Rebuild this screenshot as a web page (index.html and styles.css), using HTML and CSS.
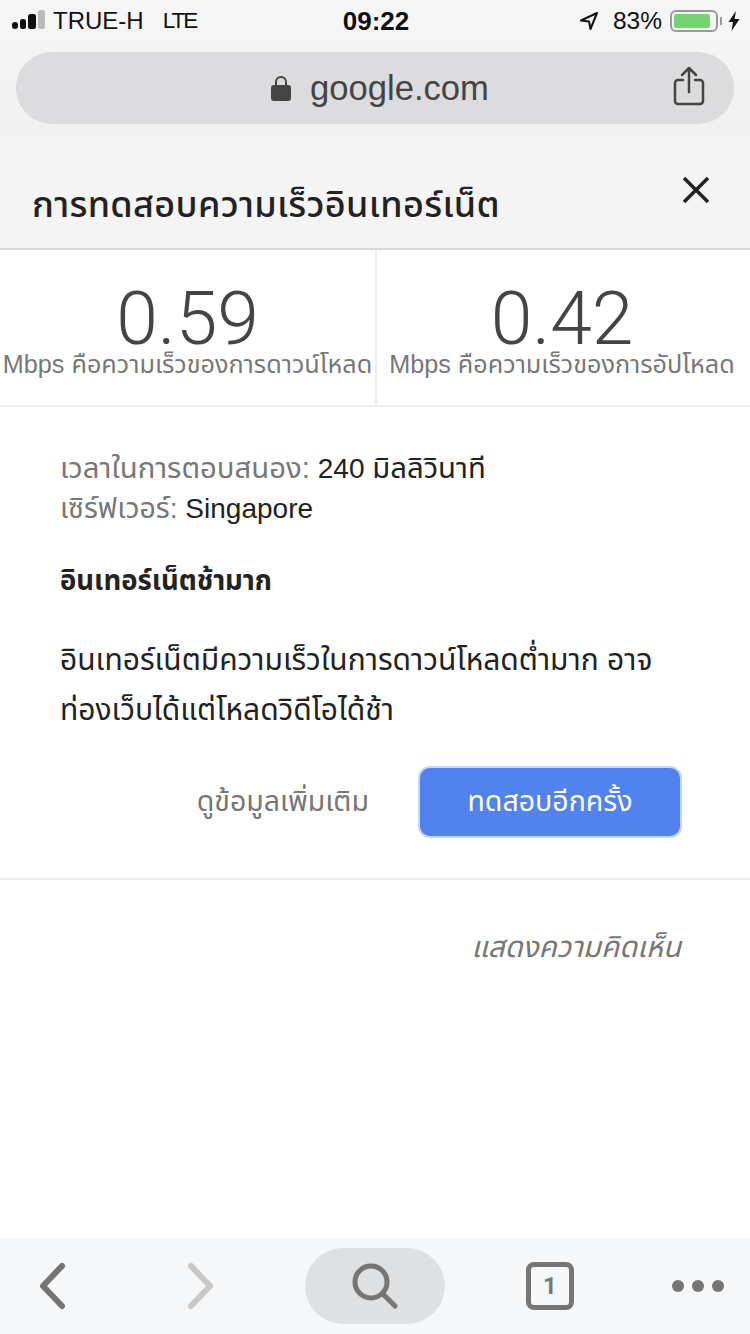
FILE: index.html
```html
<!DOCTYPE html>
<html lang="th">
<head>
    <meta charset="UTF-8">
    <meta name="viewport" content="width=device-width, initial-scale=1.0">
    <title>google.com</title>
    <link rel="stylesheet" href="styles.css">
</head>
<body>
    <div class="page">
        <div class="browser-top">
            <div class="status-bar">
                <div class="status-left">
                    <svg class="signal" width="34" height="20" viewBox="0 0 34 20">
                        <rect x="0" y="12" width="6" height="7" rx="3" fill="#111"/>
                        <rect x="8" y="9" width="6" height="10" rx="2.5" fill="#111"/>
                        <rect x="16" y="4" width="8" height="15" rx="2.5" fill="#111"/>
                        <rect x="26" y="0" width="7" height="19" rx="2" fill="#bbb"/>
                    </svg>
                    <span class="carrier">TRUE-H</span>
                    <span class="network">LTE</span>
                </div>
                <div class="status-time">09:22</div>
                <div class="status-right">
                    <svg width="20" height="20" viewBox="0 0 20 20">
                        <path d="M18 2 L2 9.5 L10 10.5 L11.5 18 Z" fill="none" stroke="#111" stroke-width="2" stroke-linejoin="round"/>
                    </svg>
                    <span class="battery-text">83%</span>
                    <div class="battery"><div class="battery-fill"></div></div>
                    <div class="battery-cap"></div>
                    <svg width="12" height="20" viewBox="0 0 12 20">
                        <path d="M8 0 L0.5 11 H5 L3.5 20 L11.5 8 H6.5 Z" fill="#111"/>
                    </svg>
                </div>
            </div>
            <div class="address-bar">
                <div class="address">
                    <svg width="20" height="26" viewBox="0 0 20 26">
                        <path d="M5 11 V7 a5 5 0 0 1 10 0 V11" fill="none" stroke="#444" stroke-width="2"/>
                        <rect x="0" y="10" width="20" height="16" rx="3" fill="#444"/>
                    </svg>
                    <span>google.com</span>
                </div>
                <svg class="share" width="32" height="40" viewBox="0 0 32 40">
                    <path d="M10 14 H5 a3 3 0 0 0 -3 3 V35 a3 3 0 0 0 3 3 H27 a3 3 0 0 0 3 -3 V17 a3 3 0 0 0 -3 -3 H22" fill="none" stroke="#444" stroke-width="2.5" stroke-linecap="round"/>
                    <path d="M16 26 V2 M9 9 L16 2 L23 9" fill="none" stroke="#444" stroke-width="2.5" stroke-linecap="round" stroke-linejoin="round"/>
                </svg>
            </div>
        </div>

        <div class="panel-head">
            <h1>การทดสอบความเร็วอินเทอร์เน็ต</h1>
            <svg class="close" width="28" height="28" viewBox="0 0 28 28">
                <path d="M2 2 L26 26 M26 2 L2 26" stroke="#222" stroke-width="3.5"/>
            </svg>
        </div>

        <div class="speeds">
            <div class="speed">
                <div class="speed-num">0.59</div>
                <div class="speed-label">Mbps คือความเร็วของการดาวน์โหลด</div>
            </div>
            <div class="speed">
                <div class="speed-num">0.42</div>
                <div class="speed-label">Mbps คือความเร็วของการอัปโหลด</div>
            </div>
        </div>

        <div class="details">
            <div class="meta"><span class="meta-key latency">เวลาในการตอบสนอง:</span> 240 <span class="latency">มิลลิวินาที</span></div>
            <div class="meta"><span class="meta-key server">เซิร์ฟเวอร์:</span> Singapore</div>
            <div class="verdict">อินเทอร์เน็ตช้ามาก</div>
            <p class="desc">อินเทอร์เน็ตมีความเร็วในการดาวน์โหลดต่ำมาก อาจ<br>ท่องเว็บได้แต่โหลดวิดีโอได้ช้า</p>
            <div class="actions">
                <a class="more">ดูข้อมูลเพิ่มเติม</a>
                <button class="retry">ทดสอบอีกครั้ง</button>
            </div>
        </div>

        <div class="feedback">แสดงความคิดเห็น</div>

        <div class="toolbar">
            <svg class="back" width="30" height="48" viewBox="0 0 30 48">
                <path d="M24 4 L5 24 L24 44" fill="none" stroke="#757575" stroke-width="6" stroke-linecap="round" stroke-linejoin="round"/>
            </svg>
            <svg class="forward" width="30" height="48" viewBox="0 0 30 48">
                <path d="M5 4 L24 24 L5 44" fill="none" stroke="#c8c8c8" stroke-width="6" stroke-linecap="round" stroke-linejoin="round"/>
            </svg>
            <div class="search-pill">
                <svg width="48" height="48" viewBox="0 0 48 48">
                    <circle cx="20" cy="20" r="16" fill="none" stroke="#757575" stroke-width="5"/>
                    <path d="M32 32 L44 44" stroke="#757575" stroke-width="5" stroke-linecap="round"/>
                </svg>
            </div>
            <div class="tabs">1</div>
            <div class="dots"><i></i><i></i><i></i></div>
        </div>
    </div>
</body>
</html>
```

FILE: styles.css
```css
* {
    box-sizing: border-box;
}

body {
    margin: 0;
    padding: 0;
    background-color: #fff;
    font-family: "Liberation Sans", "Noto Sans", "Noto Sans Thai", "DejaVu Sans", sans-serif;
}

.page {
    width: 750px;
    height: 1334px;
    display: flex;
    flex-direction: column;
    overflow: hidden;
}

.browser-top {
    height: 136px;
    background: linear-gradient(#f6f6f7, #f0f0f1);
    flex-shrink: 0;
}

.status-bar {
    height: 42px;
    padding: 0 10px 0 12px;
    display: flex;
    align-items: center;
    justify-content: space-between;
    color: #111;
    font-size: 24px;
}

.status-left, .status-right {
    width: 250px;
    display: flex;
    align-items: center;
}

.status-right {
    justify-content: flex-end;
}

.signal {
    margin-right: 7px;
    margin-bottom: 2px;
}

.network {
    margin-left: 19px;
    font-size: 22.5px;
    letter-spacing: -2px;
}

.status-time {
    font-size: 26px;
    font-weight: bold;
}

.battery-text {
    margin-left: 14px;
    margin-right: 8px;
    font-size: 24.5px;
}

.battery {
    width: 48px;
    height: 22px;
    border: 2px solid #999;
    border-radius: 6px;
    padding: 2px;
}

.battery-fill {
    width: 36px;
    height: 14px;
    background-color: #72d572;
    border-radius: 2px;
}

.battery-cap {
    width: 2px;
    height: 8px;
    background-color: #999;
    margin: 0 6px 0 2px;
}

.address-bar {
    height: 72px;
    margin: 10px 16px 0;
    background-color: #dcdcde;
    border-radius: 36px;
    display: flex;
    align-items: center;
    justify-content: center;
    position: relative;
}

.address {
    display: flex;
    align-items: center;
    gap: 19px;
    padding-left: 10px;
    color: #444;
    font-size: 34.6px;
}

.share {
    position: absolute;
    right: 29px;
    top: 14px;
}

.panel-head {
    height: 114px;
    padding: 0 40px 0 32px;
    background-color: #f4f4f4;
    border-bottom: 2px solid #d8d8d8;
    display: flex;
    align-items: center;
    justify-content: space-between;
    flex-shrink: 0;
}

h1 {
    margin: 28px 0 0;
    font-size: 36px;
    letter-spacing: 0.35px;
    font-weight: 500;
    color: #222;
}

.close {
    margin-bottom: 5px;
}

.speeds {
    display: flex;
    height: 157px;
    border-bottom: 2px solid #eee;
    flex-shrink: 0;
}

.speed {
    width: 375px;
    text-align: center;
    padding-top: 33px;
}

.speed:last-child {
    border-left: 2px solid #eee;
    padding-right: 3px;
}

.speed-num {
    font-family: Roboto, "Liberation Sans", sans-serif;
    font-weight: 300;
    font-size: 75px;
    line-height: 70px;
    color: #444;
}

.speed-label {
    font-size: 25.2px;
    line-height: 22px;
    color: #777;
    white-space: nowrap;
}

.details {
    height: 473px;
    padding: 41px 68px 0 60px;
    border-bottom: 2px solid #eee;
    flex-shrink: 0;
}

.meta {
    height: 40px;
    font-size: 28px;
    line-height: 40px;
    color: #222;
}

.meta .latency {
    font-size: 29.3px;
}

.meta .server {
    font-size: 28.5px;
}

.meta-key {
    color: #777;
}

.verdict {
    margin-top: 33px;
    font-size: 27.5px;
    line-height: 40px;
    font-weight: bold;
    color: #222;
}

.desc {
    margin: 34px 0 0;
    font-size: 30px;
    line-height: 50px;
    color: #222;
}

.actions {
    margin-top: 31px;
    display: flex;
    align-items: center;
    justify-content: flex-end;
    gap: 49px;
}

.more {
    font-size: 28.5px;
    color: #777;
}

.retry {
    width: 264px;
    height: 72px;
    background-color: #5282ee;
    border: 2px solid #c5d5f5;
    border-radius: 12px;
    color: #fff;
    font-family: inherit;
    font-size: 28.5px;
}

.feedback {
    padding: 46px 69px 0 0;
    text-align: right;
    font-size: 29.4px;
    font-style: italic;
    color: #777;
    flex-grow: 1;
}

.toolbar {
    height: 96px;
    padding-left: 38px;
    background-color: #f6f7f9;
    display: flex;
    align-items: center;
    flex-shrink: 0;
}

.forward {
    margin-left: 118px;
}

.search-pill {
    margin-left: 89px;
    width: 140px;
    height: 76px;
    background-color: #dfe0e2;
    border-radius: 38px;
    display: flex;
    align-items: center;
    justify-content: center;
}

.tabs {
    margin-left: 81px;
    width: 48px;
    height: 48px;
    border: 5px solid #757575;
    border-radius: 8px;
    color: #757575;
    font-family: Roboto, sans-serif;
    font-size: 24px;
    font-weight: bold;
    text-align: center;
    line-height: 38px;
}

.dots {
    margin-left: 98px;
    display: flex;
    gap: 8px;
}

.dots i {
    width: 12px;
    height: 12px;
    border-radius: 50%;
    background-color: #757575;
}
```
